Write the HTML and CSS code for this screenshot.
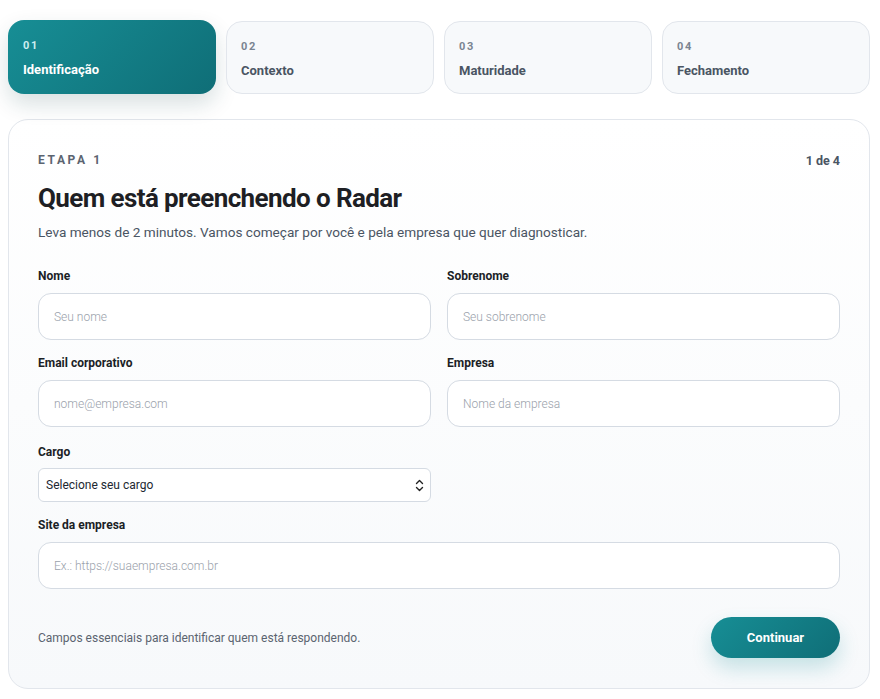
FILE: index.html
```html
<!DOCTYPE html>
<html lang="pt-BR">
<head>
<meta charset="utf-8">
<title>Radar</title>
<link rel="stylesheet" href="styles.css">
</head>
<body>
<div class="page">
  <nav class="steps">
    <div class="step active"><span class="num">01</span><span class="name">Identificação</span></div>
    <div class="step"><span class="num">02</span><span class="name">Contexto</span></div>
    <div class="step"><span class="num">03</span><span class="name">Maturidade</span></div>
    <div class="step"><span class="num">04</span><span class="name">Fechamento</span></div>
  </nav>
  <section class="card">
    <div class="card-top">
      <span class="eyebrow">ETAPA 1</span>
      <span class="count">1 de 4</span>
    </div>
    <h1 class="title">Quem está preenchendo o Radar</h1>
    <p class="lead">Leva menos de 2 minutos. Vamos começar por você e pela empresa que quer diagnosticar.</p>
    <div class="grid">
      <label class="field"><span class="label">Nome</span><input class="input" placeholder="Seu nome"></label>
      <label class="field"><span class="label">Sobrenome</span><input class="input" placeholder="Seu sobrenome"></label>
      <label class="field"><span class="label">Email corporativo</span><input class="input" placeholder="nome@empresa.com"></label>
      <label class="field"><span class="label">Empresa</span><input class="input" placeholder="Nome da empresa"></label>
      <label class="field cargo"><span class="label">Cargo</span>
        <span class="select">
          <span class="select-text">Selecione seu cargo</span>
          <svg class="chev" width="9" height="13" viewBox="0 0 9 13"><path d="M1.5 4.5 L4.5 1.5 L7.5 4.5 M1.5 8.5 L4.5 11.5 L7.5 8.5" fill="none" stroke="#222" stroke-width="1.4" stroke-linecap="round" stroke-linejoin="round"/></svg>
        </span>
      </label>
      <div></div>
      <label class="field wide"><span class="label">Site da empresa</span><input class="input" placeholder="Ex.: https://suaempresa.com.br"></label>
    </div>
    <div class="footer">
      <span class="note">Campos essenciais para identificar quem está respondendo.</span>
      <button class="btn">Continuar</button>
    </div>
  </section>
</div>
</body>
</html>
```
FILE: styles.css
```css
* { box-sizing: border-box; }
html, body { margin: 0; padding: 0; background: #ffffff; }
body { font-family: Roboto, "Noto Sans", Arial, sans-serif; color: #1f2937; }
.page { padding: 21px 10px 10px 8px; }
.steps { display: grid; grid-template-columns: repeat(4, 1fr); gap: 10px; }
.step {
  height: 73px; border: 1px solid #e2e6ec; border-radius: 16px;
  background: #f7f9fb; padding: 18px 15px 0 14px;
  display: flex; flex-direction: column; gap: 9px;
}
.step .num { font-size: 11px; font-weight: 700; letter-spacing: 1.8px; color: #7a8491; line-height: 14px; }
.step .name { font-size: 13px; font-weight: 700; color: #4a5563; line-height: 16px; }
.step.active {
  margin-top: -1px; height: 74px; border: none; padding: 19px 15px 0 15px;
  background: linear-gradient(135deg, #178e95 0%, #0f6e77 100%);
  box-shadow: 0 10px 22px rgba(15, 60, 70, 0.16);
}
.step.active .num { color: #cdeef0; }
.step.active .name { color: #ffffff; }
.card {
  margin-top: 25px; border: 1px solid #e2e6ec; border-radius: 20px;
  background: linear-gradient(180deg, #ffffff 0%, #f7f9fb 100%);
  padding: 32px 29px 30px 29px; height: 570px;
}
.card-top { display: flex; justify-content: space-between; align-items: center; height: 16px; }
.eyebrow { font-size: 12px; font-weight: 700; letter-spacing: 2.6px; color: #5b6470; }
.count { font-size: 12.5px; font-weight: 700; color: #4a5563; }
.title {
  margin: 14px 0 0; font-size: 26px; line-height: 32px; font-weight: 700;
  color: #1e1f24; letter-spacing: -0.6px; font-family: Roboto, sans-serif;
}
.lead { margin: 8px 0 0; font-size: 13.6px; line-height: 20px; color: #4a5563; }
.grid { margin-top: 26px; display: grid; grid-template-columns: 1fr 1fr; column-gap: 16px; row-gap: 15px; }
.field { display: flex; flex-direction: column; gap: 9px; }
.field.cargo { margin-top: 2px; gap: 8px; }
.field.wide { grid-column: 1 / span 2; }
.label { font-size: 12px; font-weight: 700; line-height: 16px; color: #1b1f26; }
.input {
  height: 47px; border: 1px solid #d5dbe3; border-radius: 13px; background: #ffffff;
  padding: 0 15px; font-family: Roboto, sans-serif; font-size: 12px; color: #1f2937; outline: none;
}
.input::placeholder { color: #9aa1ab; font-weight: 300; }
.select {
  height: 34px; border: 1px solid #d5dbe3; border-radius: 6px; background: #ffffff;
  display: flex; align-items: center; justify-content: space-between; padding: 0 6px 0 7px;
}
.select-text { font-size: 12px; color: #222831; }
.footer { margin-top: 28px; display: flex; justify-content: space-between; align-items: center; }
.note { font-size: 12px; color: #5b6470; }
.btn {
  width: 129px; height: 41px; border: none; border-radius: 21px; cursor: pointer;
  background: linear-gradient(135deg, #178e95 0%, #0f6e77 100%);
  color: #ffffff; font-family: Roboto, sans-serif; font-size: 13px; font-weight: 700;
  box-shadow: 0 10px 20px rgba(20, 140, 150, 0.22);
}
```
